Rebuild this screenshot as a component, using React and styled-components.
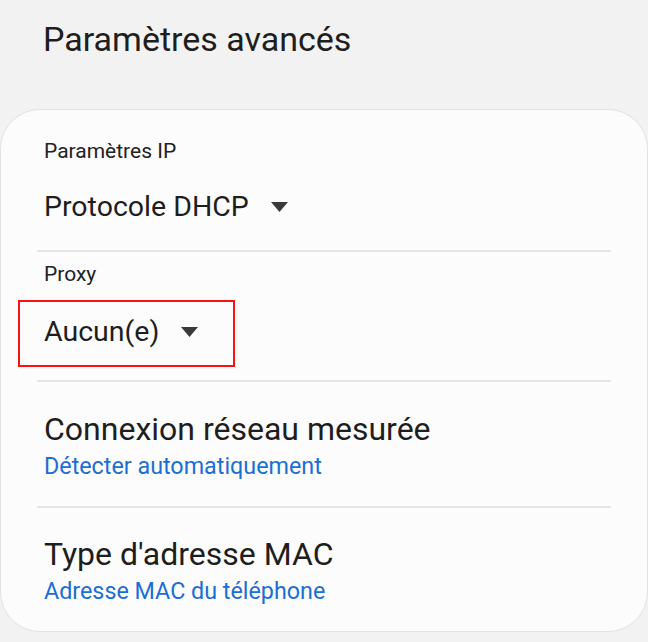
import React from "react";
import styled, { createGlobalStyle } from "styled-components";

const Global = createGlobalStyle`
  html, body { margin: 0; padding: 0; background: #f2f2f2; }
  body { font-family: Roboto, "Noto Sans", sans-serif; color: #1f1f1f; }
`;

const Page = styled.div`
  width: 648px;
  height: 642px;
  background: #f2f2f2;
  display: flex;
  flex-direction: column;
  overflow: hidden;
`;

const Header = styled.h1`
  margin: 0;
  padding: 17px 0 0 43px;
  height: 93px;
  box-sizing: border-box;
  font-size: 34px;
  font-weight: 400;
  line-height: 44px;
  color: #1e1e1e;
`;

const Card = styled.section`
  background: #fcfcfc;
  border: 1px solid #e3e3e3;
  border-radius: 40px;
  box-sizing: border-box;
  height: 523px;
  margin: 16px 0 0 0;
  padding-top: 29px;
  display: flex;
  flex-direction: column;
`;

const Label = styled.div`
  padding-left: 43px;
  margin-top: ${(p) => p.$mt || 0}px;
  font-size: 21px;
  line-height: 24px;
  color: #222;
`;

const DropRow = styled.div`
  display: flex;
  align-items: center;
  gap: 22px;
  height: 87px;
  padding-left: 43px;
  font-size: 28.5px;
  color: #1e1e1e;
`;

const HighlightWrap = styled.div`
  padding: 14px 0 13px 17px;
`;

const Highlight = styled.div`
  width: 217px;
  height: 67px;
  border: 2px solid #ff1010;
  box-sizing: border-box;
  display: flex;
  align-items: center;
  gap: 22px;
  padding: 0 0 4px 24px;
  font-size: 28.5px;
  color: #1e1e1e;
`;

const Divider = styled.hr`
  margin: 0 36px 0 36px;
  border: 0;
  border-top: 2px solid #e6e6e6;
  height: 0;
`;

const Item = styled.div`
  display: flex;
  flex-direction: column;
  padding: ${(p) => p.$pt}px 0 0 43px;
  height: ${(p) => p.$h}px;
  box-sizing: border-box;
`;

const ItemTitle = styled.div`
  font-size: 32px;
  line-height: 36px;
  color: #1e1e1e;
`;

const ItemSub = styled.div`
  margin-top: 4px;
  font-size: 23.3px;
  line-height: 30px;
  color: #1a6fd4;
`;

const Arrow = () => (
  <svg width="17" height="10" viewBox="0 0 17 10">
    <path d="M0 0 H17 L8.5 10 Z" fill="#3a3a3a" />
  </svg>
);

export default function App() {
  return (
    <Page>
      <Global />
      <Header>Paramètres avancés</Header>
      <Card>
        <Label>Paramètres IP</Label>
        <DropRow>
          <span>Protocole DHCP</span>
          <Arrow />
        </DropRow>
        <Divider />
        <Label $mt={10}>Proxy</Label>
        <HighlightWrap>
          <Highlight>
            <span>Aucun(e)</span>
            <Arrow />
          </Highlight>
        </HighlightWrap>
        <Divider />
        <Item $h={124} $pt={29}>
          <ItemTitle>Connexion réseau mesurée</ItemTitle>
          <ItemSub>Détecter automatiquement</ItemSub>
        </Item>
        <Divider />
        <Item $h={120} $pt={28}>
          <ItemTitle>Type d'adresse MAC</ItemTitle>
          <ItemSub>Adresse MAC du téléphone</ItemSub>
        </Item>
      </Card>
    </Page>
  );
}
